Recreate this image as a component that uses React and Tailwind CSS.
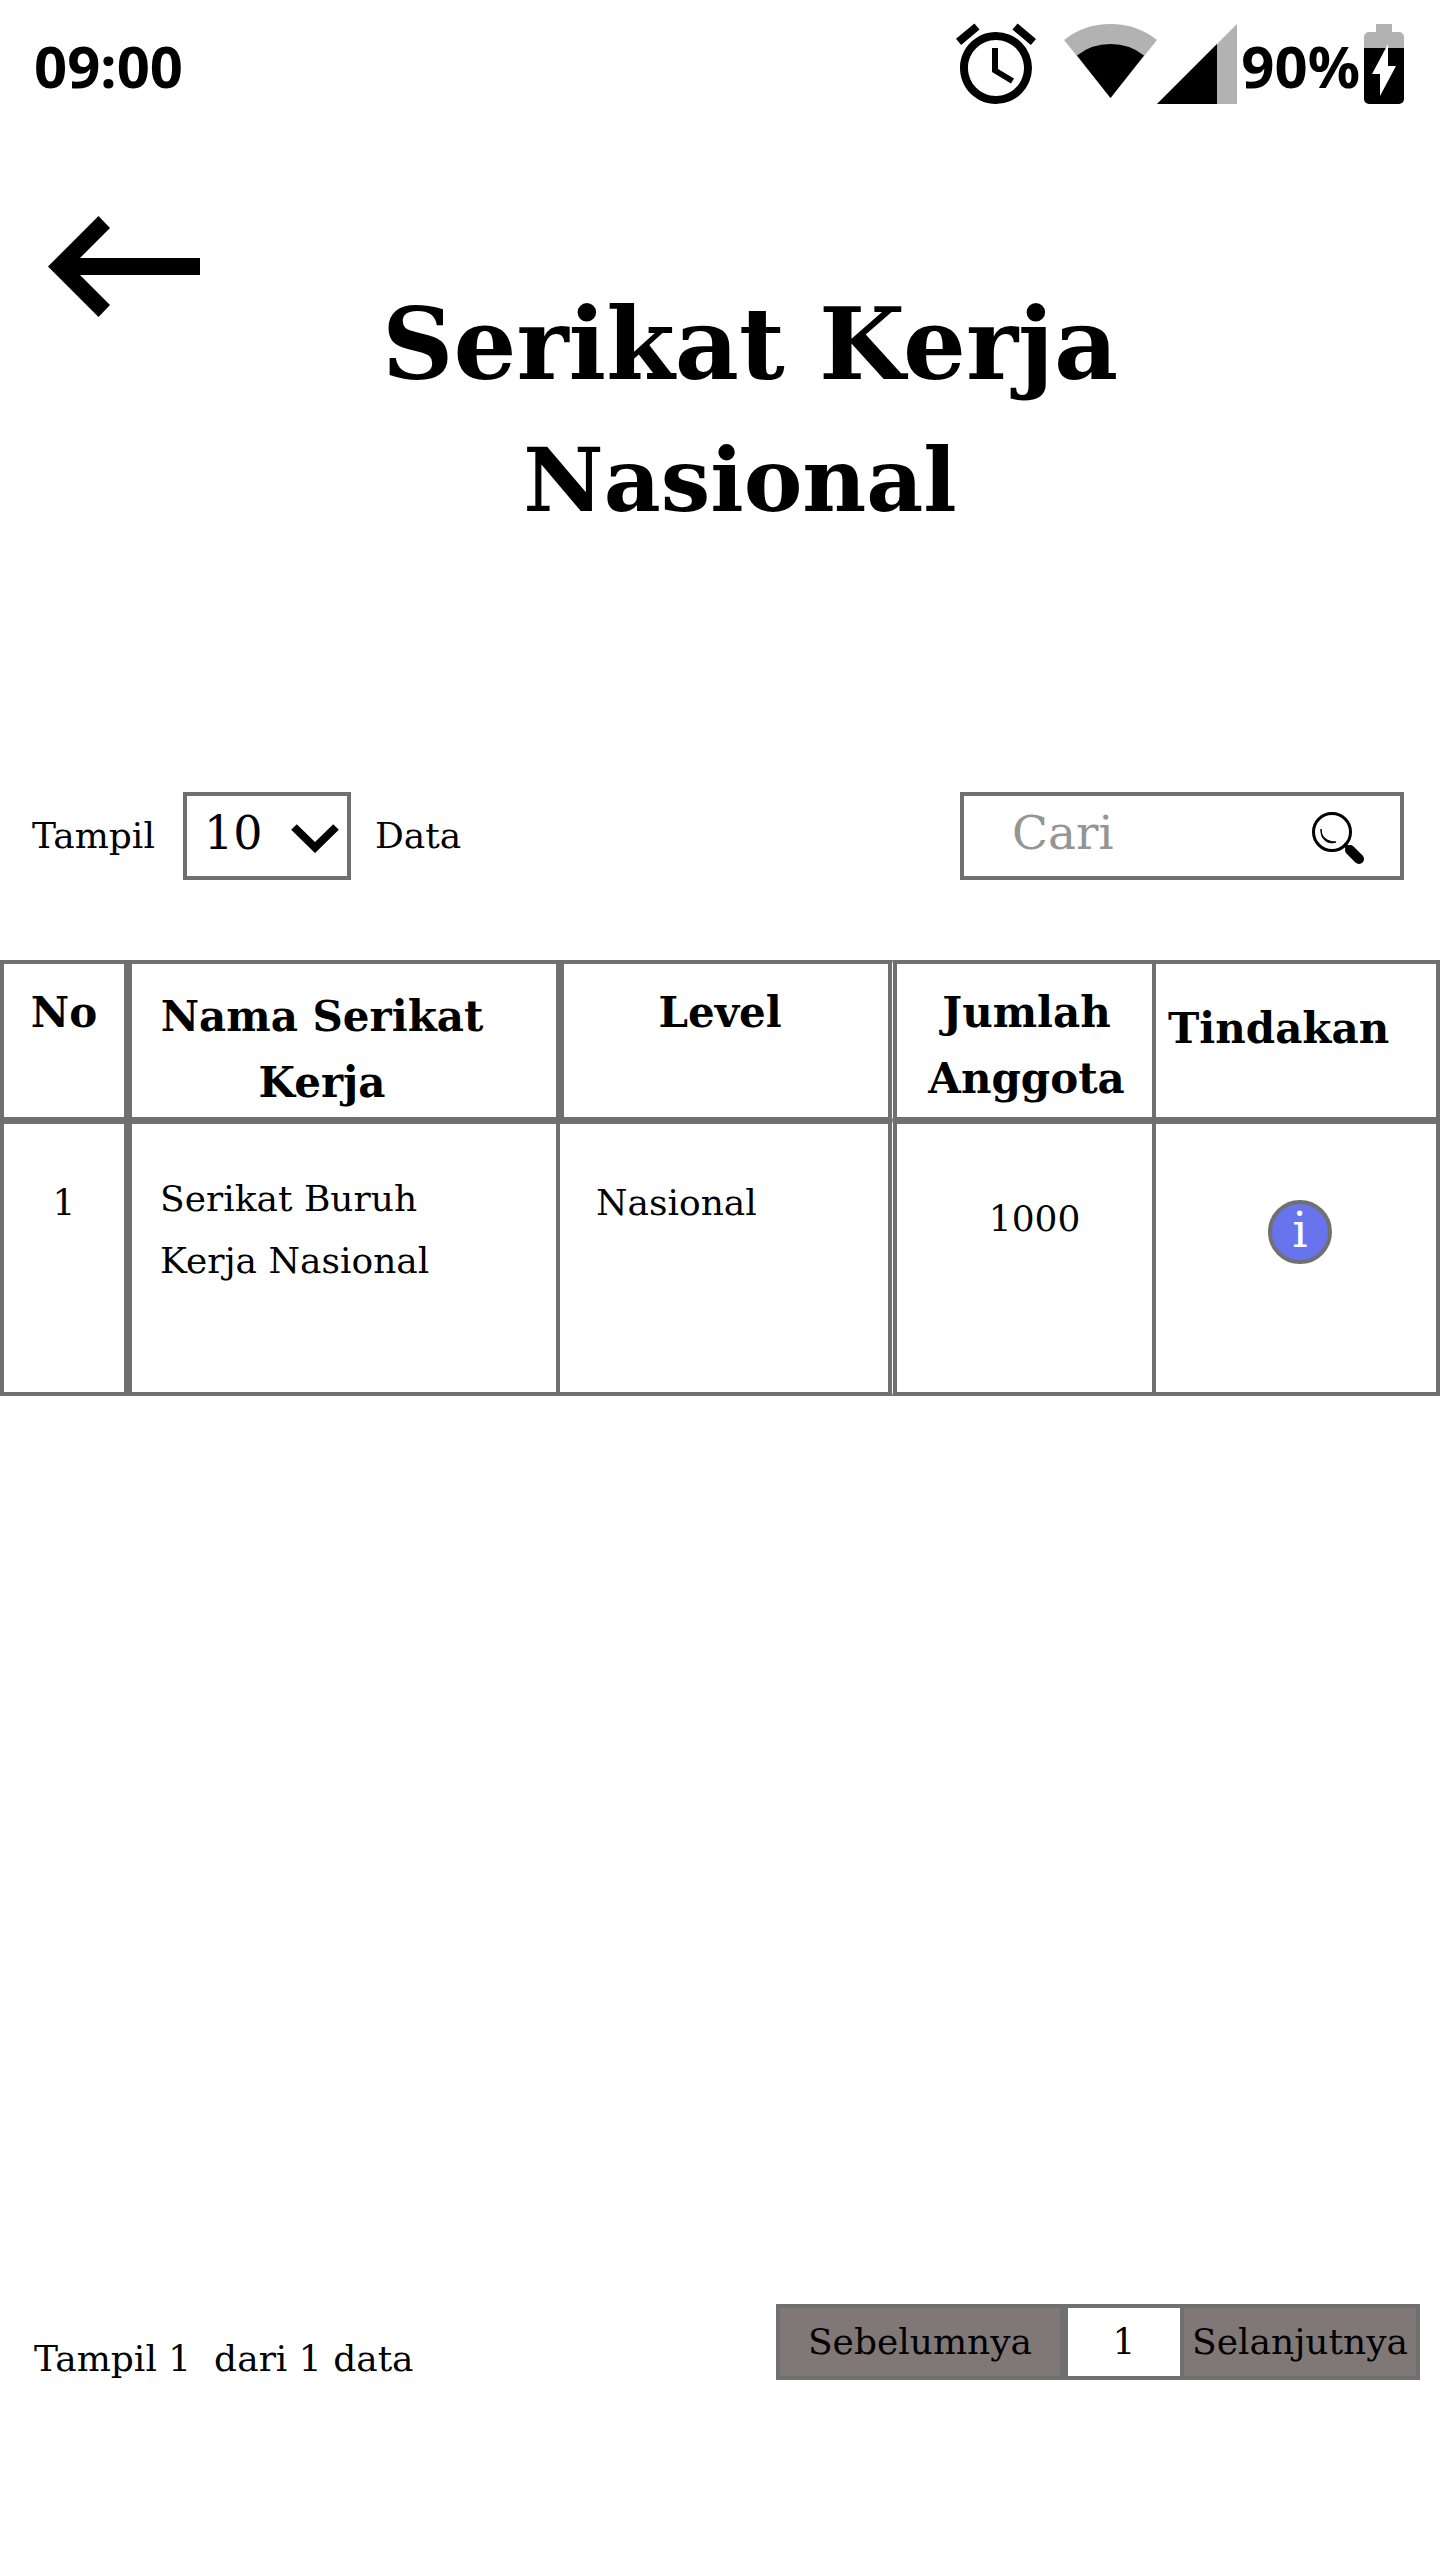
import React from "react";

function AlarmIcon() {
  return (
    <svg viewBox="2 2 20 20" className="h-20 w-20 overflow-visible" fill="black" aria-hidden="true">
      <path d="M22 5.72l-4.6-3.86-1.29 1.53 4.6 3.86L22 5.72zM7.88 3.39L6.6 1.86 2 5.71l1.29 1.53 4.59-3.85zM12.5 8H11v6l4.75 2.85.75-1.23-4-2.37V8zM12 4c-4.97 0-9 4.03-9 9s4.02 9 9 9a9 9 0 0 0 0-18zm0 16c-3.87 0-7-3.13-7-7s3.13-7 7-7 7 3.13 7 7-3.13 7-7 7z" />
    </svg>
  );
}

function WifiIcon() {
  return (
    <svg viewBox="0 0 93 80" className="ml-7 h-20 w-[93px]" aria-hidden="true">
      <path d="M46.5 74L0 16Q20 0 46.5 0T93 16z" fill="#b2b2b2" />
      <path d="M46.5 74L13 31.500Q27 20 46.5 20T80 31.500z" fill="black" />
    </svg>
  );
}

function SignalIcon() {
  return (
    <svg viewBox="0 0 80 80" className="h-20 w-20" aria-hidden="true">
      <path d="M0 80H80V0z" fill="#b2b2b2" />
      <path d="M0 80H60V20z" fill="black" />
    </svg>
  );
}

function BatteryIcon() {
  return (
    <svg viewBox="0 0 40 80" className="ml-1 h-20 w-10" aria-hidden="true">
      <path d="M12 0H28V8H35a5 5 0 0 1 5 5V24H0V13a5 5 0 0 1 5-5h7z" fill="#b2b2b2" />
      <path d="M0 24H40V75a5 5 0 0 1-5 5H5a5 5 0 0 1-5-5z" fill="black" />
      <path d="M24 20V42H32L16 72V50H8z" fill="white" />
    </svg>
  );
}

function StatusBar() {
  return (
    <div className="flex h-[104px] items-center justify-between pt-6 pr-9 pl-[34px] font-['Noto_Sans',sans-serif] text-[58px] leading-[80px] font-bold">
      <span className="pt-1">09:00</span>
      <div className="flex items-center">
        <AlarmIcon />
        <WifiIcon />
        <SignalIcon />
        <span className="ml-1 pt-1">90%</span>
        <BatteryIcon />
      </div>
    </div>
  );
}

const th = "border-t-4 border-b-[3px] border-[#707070] align-top text-[42px] leading-[66px] font-bold";
const td = "border-y-4 border-[#707070] align-top text-4xl leading-[62px]";

export default function App() {
  return (
    <div className="flex min-h-screen flex-col bg-white font-['DejaVu_Serif',serif] text-black">
      <StatusBar />

      <header className="mt-28 flex items-start pr-[140px] pl-12">
        <button type="button" aria-label="Kembali" className="shrink-0">
          <svg viewBox="0 0 152 101" className="h-[101px] w-[152px]" fill="black" aria-hidden="true">
            <path d="M0 50.500L50.500 0L62 12L32 42H152V59H32L62 89L50.500 101z" />
          </svg>
        </button>
        <h1 className="mt-[60px] flex-1 text-center leading-[136px] font-bold">
          <span className="block text-[99px]">Serikat Kerja</span>
          <span className="block pr-5 text-[88px]">Nasional</span>
        </h1>
      </header>

      <div className="mt-[244px] flex h-[88px] items-center justify-between pr-9 pl-8 text-4xl">
        <div className="flex items-center">
          <label htmlFor="jumlah">Tampil</label>
          <div className="relative mr-6 ml-7 h-[88px] w-[168px]">
            <select
              id="jumlah"
              defaultValue="10"
              className="h-full w-full appearance-none border-4 border-[#707070] bg-white pb-1 pl-[17px] text-[46px]"
            >
              <option>10</option>
            </select>
            <svg
              viewBox="0 0 48 29"
              className="pointer-events-none absolute top-8 right-3 h-[29px] w-12"
              fill="none"
              stroke="black"
              strokeWidth="8"
              aria-hidden="true"
            >
              <path d="M3 3L24 23.500L45 3" />
            </svg>
          </div>
          <span>Data</span>
        </div>
        <div className="relative h-[88px] w-[444px]">
          <input
            type="search"
            aria-label="Cari"
            placeholder="Cari"
            className="h-full w-full appearance-none border-4 border-[#707070] pr-24 pb-2 pl-12 text-[47px] placeholder:text-[#959595]"
          />
          <svg viewBox="0 0 52 52" className="pointer-events-none absolute top-5 right-10 h-[52px] w-[52px]" aria-hidden="true">
            <circle cx="20" cy="20" r="18.500" fill="none" stroke="black" strokeWidth="3" />
            <path d="M9 17C9 25 15 30 24 30C17 33 8 28 9 17z" fill="black" stroke="black" strokeWidth="1" />
            <path d="M32 32L36 36" stroke="black" strokeWidth="4" />
            <path d="M38 38L47 47" stroke="black" strokeWidth="10" strokeLinecap="round" />
          </svg>
        </div>
      </div>

      <table className="mt-20 w-full table-fixed border-separate border-spacing-0">
        <colgroup>
          <col className="w-[8.89%]" />
          <col className="w-[30%]" />
          <col className="w-[23.06%]" />
          <col className="w-[18.33%]" />
          <col />
        </colgroup>
        <thead>
          <tr className="h-40">
            <th className={`${th} border-x-4 pt-4`}>No</th>
            <th className={`${th} border-x-4 pt-5 pr-14 pl-3`}>Nama Serikat Kerja</th>
            <th className={`${th} border-x-4 pt-4 pr-3`}>Level</th>
            <th className={`${th} border-r-4 border-l border-l-white pt-4 pl-2 shadow-[inset_4px_0_0_#707070]`}>
              Jumlah Anggota
            </th>
            <th className={`${th} border-r-4 pt-8 pl-3 text-left`}>Tindakan</th>
          </tr>
        </thead>
        <tbody>
          <tr className="h-[276px]">
            <td className={`${td} border-x-4 pt-12 text-center`}>1</td>
            <td className={`${td} border-x-4 pt-11 pr-14 pl-7`}>Serikat Buruh Kerja Nasional</td>
            <td className={`${td} border-r-4 pt-12 pl-9`}>Nasional</td>
            <td className={`${td} border-r-4 border-l border-l-white pt-16 pl-6 text-center shadow-[inset_4px_0_0_#707070]`}>
              1000
            </td>
            <td className={`${td} border-r-4 pt-[76px] pl-2`}>
              <button
                type="button"
                aria-label="Info"
                className="mx-auto flex h-16 w-16 items-center justify-center rounded-full border-4 border-[#707070] bg-[#6874ee] pb-1 text-5xl leading-none text-white"
              >
                i
              </button>
            </td>
          </tr>
        </tbody>
      </table>

      <footer className="mt-auto mb-[180px] flex items-end justify-between pr-5 pl-[34px] text-4xl">
        <p className="leading-[42px] whitespace-pre">Tampil 1  dari 1 data</p>
        <nav aria-label="Halaman" className="flex h-[76px]">
          <button type="button" className="w-72 border-4 border-[#707070] bg-[#807777]">
            Sebelumnya
          </button>
          <button type="button" aria-current="page" className="w-[120px] border-4 border-[#707070] bg-white">
            1
          </button>
          <button type="button" className="w-[236px] border-4 border-l-0 border-[#707070] bg-[#807777]">
            Selanjutnya
          </button>
        </nav>
      </footer>
    </div>
  );
}
